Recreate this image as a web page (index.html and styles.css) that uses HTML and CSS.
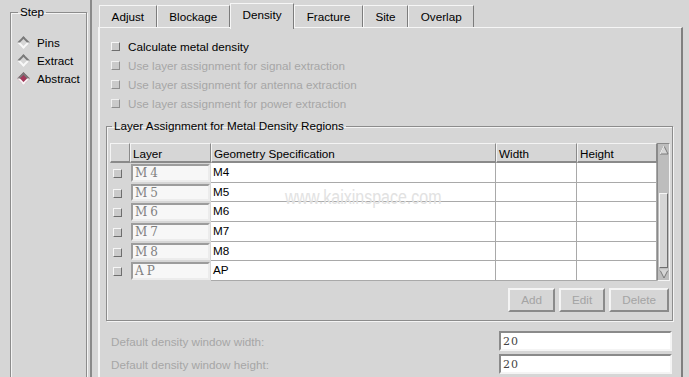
FILE: index.html
```html
<!DOCTYPE html>
<html lang="en">

<head>
  <meta charset="UTF-8" />
  <title>Abstract – Density</title>
  <link rel="stylesheet" href="styles.css">
</head>

<body>
  <div class="app">
    <aside class="side">
      <fieldset class="group step-group">
        <legend>Step</legend>
        <label class="radio"><span class="diamond"></span>Pins</label>
        <label class="radio"><span class="diamond"></span>Extract</label>
        <label class="radio"><span class="diamond on"></span>Abstract</label>
      </fieldset>
    </aside>

    <main class="tabs">
      <nav class="tabbar">
        <span class="tab">Adjust</span>
        <span class="tab">Blockage</span>
        <span class="tab active">Density</span>
        <span class="tab">Fracture</span>
        <span class="tab">Site</span>
        <span class="tab">Overlap</span>
      </nav>

      <section class="panel">
        <div class="options">
          <label class="check"><span class="box"></span>Calculate metal density</label>
          <label class="check off"><span class="box"></span>Use layer assignment for signal extraction</label>
          <label class="check off"><span class="box"></span>Use layer assignment for antenna extraction</label>
          <label class="check off"><span class="box"></span>Use layer assignment for power extraction</label>
        </div>

        <fieldset class="group regions">
          <legend>Layer Assignment for Metal Density Regions</legend>
          <div class="table-wrap">
            <div class="table">
              <div class="th"></div>
              <div class="th">Layer</div>
              <div class="th">Geometry Specification</div>
              <div class="th">Width</div>
              <div class="th">Height</div>

              <div class="td chk"><span class="box"></span></div>
              <div class="td layer"><span class="entry">M4</span></div>
              <div class="td">M4</div>
              <div class="td"></div>
              <div class="td"></div>

              <div class="td chk"><span class="box"></span></div>
              <div class="td layer"><span class="entry">M5</span></div>
              <div class="td">M5</div>
              <div class="td"></div>
              <div class="td"></div>

              <div class="td chk"><span class="box"></span></div>
              <div class="td layer"><span class="entry">M6</span></div>
              <div class="td">M6</div>
              <div class="td"></div>
              <div class="td"></div>

              <div class="td chk"><span class="box"></span></div>
              <div class="td layer"><span class="entry">M7</span></div>
              <div class="td">M7</div>
              <div class="td"></div>
              <div class="td"></div>

              <div class="td chk"><span class="box"></span></div>
              <div class="td layer"><span class="entry">M8</span></div>
              <div class="td">M8</div>
              <div class="td"></div>
              <div class="td"></div>

              <div class="td chk"><span class="box"></span></div>
              <div class="td layer"><span class="entry">AP</span></div>
              <div class="td">AP</div>
              <div class="td"></div>
              <div class="td"></div>
            </div>

            <div class="scrollbar">
              <svg class="arrow" width="10" height="10" viewBox="0 0 10 10">
                <path d="M5 1 L9 9 L1 9 Z" fill="#d6d6d6" stroke="#7a7a7a" stroke-width="1" />
                <path d="M5 1 L1 9" stroke="#fff" stroke-width="1" />
              </svg>
              <div class="trough">
                <div class="thumb"></div>
              </div>
              <svg class="arrow" width="10" height="10" viewBox="0 0 10 10">
                <path d="M1 1 L9 1 L5 9 Z" fill="#d6d6d6" stroke="#7a7a7a" stroke-width="1" />
                <path d="M1 1 L9 1" stroke="#fff" stroke-width="1" />
              </svg>
            </div>
          </div>

          <div class="actions">
            <button disabled>Add</button>
            <button disabled>Edit</button>
            <button disabled>Delete</button>
          </div>
        </fieldset>

        <div class="defaults">
          <div class="field"><span>Default density window width:</span><input type="text" value="20" /></div>
          <div class="field"><span>Default density window height:</span><input type="text" value="20" /></div>
        </div>

        <div class="watermark">www.kaixinspace.com</div>
      </section>
    </main>
  </div>
</body>

</html>
```

FILE: styles.css
```css
body {
  margin: 0;
  background: #d6d6d6;
  font-family: 'Liberation Sans', Arial, sans-serif;
  font-size: 11.7px;
  color: #000;
  overflow: hidden;
}

.app {
  display: flex;
  height: 377px;
}

/* etched group box */
.group {
  margin: 0;
  padding: 0;
  border: 1px solid #8c8c8c;
  box-shadow: 1px 1px 0 #f4f4f4, inset 1px 1px 0 #f4f4f4;
  min-width: 0;
}

.group legend {
  padding: 0 2px;
  line-height: 14px;
}

/* left step column */
.side {
  flex: 0 0 auto;
  width: 80px;
  padding: 5px 0 0 10px;
  border-right: 2px solid #8a8a8a;
}

.step-group {
  width: 77px;
  height: 380px;
  box-sizing: border-box;
  padding: 14px 0 0 6px;
}

.step-group legend {
  margin-left: 1px;
}

.radio {
  display: flex;
  align-items: center;
  height: 18px;
}

.diamond {
  width: 9px;
  height: 9px;
  box-sizing: border-box;
  margin: 0 9px 0 2px;
  transform: rotate(45deg);
  border: 2px solid;
  border-color: #7a7a7a #f8f8f8 #f8f8f8 #7a7a7a;
  background: #d6d6d6;
}

.diamond.on {
  background: #a3385a;
}

/* tab widget */
.tabs {
  flex: 0 0 auto;
  width: 585px;
  margin-left: 6px;
  display: flex;
  flex-direction: column;
}

.tabbar {
  display: flex;
  align-items: flex-end;
  height: 27px;
  padding-left: 1px;
}

.tab {
  height: 21px;
  line-height: 21px;
  padding: 0 11.6px;
  border-top: 1px solid #f6f6f6;
  border-left: 1px solid #f6f6f6;
  border-right: 1px solid #7c7c7c;
}

.tab.active {
  height: 25px;
  line-height: 21px;
  margin-bottom: -2px;
  background: #d6d6d6;
  position: relative;
  z-index: 1;
}

.panel {
  position: relative;
  flex: 1;
  border: 2px solid;
  border-color: #f6f6f6 #7f7f7f #7f7f7f #f6f6f6;
  border-top-width: 1px;
  border-bottom: none;
}

.options {
  padding: 9px 0 0 11px;
}

.check {
  display: flex;
  align-items: center;
  height: 19px;
}

.check.off {
  color: #a6a6a6;
}

.box {
  display: block;
  flex: 0 0 auto;
  width: 9px;
  height: 9px;
  box-sizing: border-box;
  border: 1px solid;
  border-color: #f6f6f6 #6e6e6e #6e6e6e #f6f6f6;
  background: #cacaca;
  margin-right: 8px;
}

.check.off .box {
  border-color: #f0f0f0 #8e8e8e #8e8e8e #f0f0f0;
}

/* layer assignment group */
.regions {
  margin: 6px 8px 0 6px;
  padding: 10px 2px 8px 3px;
}

.regions legend {
  margin-left: 2px;
}

.table-wrap {
  display: flex;
}

.table {
  display: grid;
  grid-template-columns: 20px 81px 285px 81px 80px;
  grid-template-rows: 20px repeat(6, 19.67px);
}

.th {
  box-sizing: border-box;
  padding: 2px 2px 0;
  border-top: 1px solid #f4f4f4;
  border-left: 1px solid #f4f4f4;
  border-right: 1px solid #8a8a8a;
  border-bottom: 2px solid #8a8a8a;
  line-height: 15px;
}

.td {
  box-sizing: border-box;
  background: #fff;
  border-right: 1px solid #a9a9a9;
  border-bottom: 1px solid #a9a9a9;
  padding: 0 2px;
  line-height: 18px;
}

.td.chk {
  background: #d6d6d6;
  border: none;
  padding: 6px 0 0 3px;
}

.td.layer {
  background: #d6d6d6;
  border: none;
  padding: 1px;
}

.entry {
  display: block;
  height: 100%;
  box-sizing: border-box;
  background: #f7f7f7;
  border: 2px solid;
  border-color: #9c9c9c #ececec #ececec #9c9c9c;
  padding-left: 2px;
  font-family: 'DejaVu Serif', 'Liberation Serif', serif;
  font-size: 12px;
  line-height: 14px;
  letter-spacing: 3px;
  color: #808080;
}

.scrollbar {
  width: 14px;
  box-sizing: border-box;
  border: 1px solid;
  border-color: #8a8a8a #f4f4f4 #f4f4f4 #8a8a8a;
  background: #bdbdbd;
  display: flex;
  flex-direction: column;
  align-items: center;
}

.arrow {
  flex: 0 0 auto;
  margin: 1px 0;
}

.trough {
  flex: 1;
  width: 100%;
  display: flex;
  flex-direction: column;
  justify-content: flex-end;
}

.thumb {
  height: 75px;
  box-sizing: border-box;
  border: 1px solid;
  border-color: #f6f6f6 #6e6e6e #6e6e6e #f6f6f6;
  background: #d6d6d6;
  margin: 0 1px;
}

.actions {
  display: flex;
  justify-content: flex-end;
  gap: 4px;
  margin-top: 7px;
  padding-right: 1px;
}

.actions button {
  height: 24px;
  padding: 0 11px;
  font: inherit;
  color: #a4a4a4;
  background: #d6d6d6;
  border: 2px solid;
  border-color: #f4f4f4 #8a8a8a #8a8a8a #f4f4f4;
}

/* default window size */
.defaults {
  display: flex;
  flex-direction: column;
  gap: 4px;
  padding: 11px 9px 0 11px;
}

.field {
  display: flex;
  justify-content: space-between;
  align-items: center;
  height: 19px;
  color: #a6a6a6;
}

.field input {
  width: 173px;
  height: 20px;
  box-sizing: border-box;
  margin: 0;
  padding: 0 0 0 2px;
  border: 2px solid;
  border-color: #8a8a8a #f4f4f4 #f4f4f4 #8a8a8a;
  background: #fff;
  font-family: 'DejaVu Serif', 'Liberation Serif', serif;
  font-size: 11px;
  letter-spacing: 1px;
  color: #444;
}

.watermark {
  position: absolute;
  left: 185px;
  top: 158px;
  font-size: 20px;
  transform: scaleX(0.8);
  transform-origin: left top;
  color: #e2e2e2;
  pointer-events: none;
}
```
